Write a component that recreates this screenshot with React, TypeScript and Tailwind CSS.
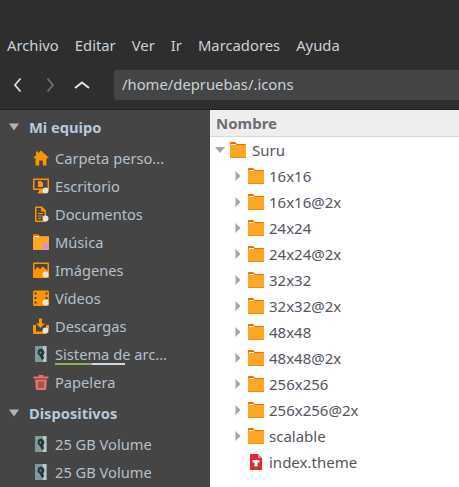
import type { ReactNode } from "react"

const font = { fontFamily: '"Noto Sans", sans-serif' }

function Folder() {
  return (
    <svg width="16" height="16" viewBox="0 0 16 16" className="shrink-0">
      <path d="M0 1a1 1 0 0 1 1-1h4l2 2h8a1 1 0 0 1 1 1V6H0z" fill="#f06a00" />
      <rect x="0" y="3" width="16" height="13" fill="#fea726" />
      <rect x="1" y="2" width="5" height="1" fill="#fff" />
      <rect x="0" y="15" width="16" height="1" fill="#e88f14" />
    </svg>
  )
}

function Home() {
  return (
    <svg width="16" height="16" viewBox="0 0 16 16">
      <path d="M8 0.500 L16 8 H13.500 V15.500 H9.800 V10.500 H6.200 V15.500 H2.500 V8 H0 L3 5.200 V1.500 H5 V3.300z" fill="#fe9500" />
    </svg>
  )
}

function Badge() {
  return <circle cx="12.500" cy="12.500" r="3" fill="#e4e4e4" />
}

function Desktop() {
  return (
    <svg width="16" height="16" viewBox="0 0 16 16">
      <path d="M1 0.500h14a1 1 0 0 1 1 1V11a1 1 0 0 1-1 1H10v2h1v1.500H5V14h1v-2H1a1 1 0 0 1-1-1V1.500a1 1 0 0 1 1-1z" fill="#fe9500" />
      <rect x="1.500" y="2" width="13" height="8.500" fill="#454545" />
      <path d="M5 3h3l2 2v4H5z" fill="#fe9500" />
      <Badge />
    </svg>
  )
}

function Doc() {
  return (
    <svg width="16" height="16" viewBox="0 0 16 16">
      <path d="M3 0.500h6l4 4V15a1 1 0 0 1-1 1H3a1 1 0 0 1-1-1V1.500a1 1 0 0 1 1-1z" fill="#fe9500" />
      <path d="M3.500 2h4.500v3.500h3.500V14.500h-8z" fill="#454545" />
      <path d="M5 7h5v1H5zM5 9.500h5v1H5zM5 12h3v1H5z" fill="#fe9500" />
      <Badge />
    </svg>
  )
}

function Music() {
  return (
    <svg width="16" height="16" viewBox="0 0 16 16">
      <path d="M0 1a1 1 0 0 1 1-1h4l2 2h8a1 1 0 0 1 1 1v3H0z" fill="#f06a00" />
      <rect x="0" y="2.500" width="16" height="13.500" rx="0.500" fill="#fea726" />
      <rect x="1" y="2" width="5" height="1" fill="#fff" />
      <rect x="9.500" y="9.500" width="6" height="6" fill="#d58fd8" />
    </svg>
  )
}

function Picture() {
  return (
    <svg width="16" height="16" viewBox="0 0 16 16">
      <rect x="0" y="0.500" width="16" height="15.500" rx="1" fill="#fe9500" />
      <rect x="1.500" y="2" width="13" height="6" fill="#454545" />
      <path d="M1.500 8l3-3 2.500 2 3-2.500 4.500 4v1h-13z" fill="#fe9500" />
      <Badge />
    </svg>
  )
}

function Film() {
  return (
    <svg width="16" height="16" viewBox="0 0 16 16">
      <rect x="0" y="0.500" width="16" height="15.500" rx="1.500" fill="#fe9500" />
      <path d="M1.500 2.500h2v2h-2zM1.500 7h2v2h-2zM1.500 11.500h2v2h-2zM12.500 2.500h2v2h-2zM12.500 7h2v2h-2z" fill="#454545" />
      <Badge />
    </svg>
  )
}

function Download() {
  return (
    <svg width="16" height="16" viewBox="0 0 16 16">
      <path d="M6 0.500h3v5h3l-4.500 4.500L3 5.500h3z" fill="#fe9500" />
      <path d="M0 7h3v6.500h10V16H1a1 1 0 0 1-1-1z" fill="#fe9500" />
      <path d="M13 7h3v4h-3z" fill="#fe9500" />
      <Badge />
    </svg>
  )
}

function Drive() {
  return (
    <svg width="16" height="16" viewBox="0 0 16 16">
      <rect x="2" y="0" width="11.500" height="16" fill="#7f9a9b" />
      <rect x="10" y="0" width="3.500" height="16" fill="#b7c6c6" />
      <path d="M7.500 2.500a4 4 0 0 1 2.800 6.800L11 12.500 9 14 6.800 10A4 4 0 0 1 7.500 2.500z" fill="#22373a" />
      <circle cx="7.500" cy="6.500" r="1" fill="#7f9a9b" />
    </svg>
  )
}

function Trash() {
  return (
    <svg width="16" height="16" viewBox="0 0 16 16">
      <path d="M0.500 2.500h5V1h5v1.500h5V4.500h-15z" fill="#ee6f67" />
      <path d="M2 5.500h12L13 16H3z" fill="#ee6f67" />
      <path d="M5.500 7.500h1v6.500h-1zM7.500 7.500h1v6.500h-1zM9.500 7.500h1v6.500h-1z" fill="#454545" />
    </svg>
  )
}

function ThemeFile() {
  return (
    <svg width="16" height="16" viewBox="0 0 16 16">
      <path d="M2 0h8l4 4v12H2z" fill="#e02b35" />
      <path d="M10 0l4 4h-4z" fill="#f28a8f" />
      <path d="M4.500 6h7v2.500H9.500V12.500h-3V8.500H4.500z" fill="#fff" />
    </svg>
  )
}

function SideRow({ icon, label, meter }: { icon: ReactNode; label: string; meter?: boolean }) {
  return (
    <div className="flex h-7 items-center pl-[33px]">
      <span className="flex w-[22px] shrink-0">{icon}</span>
      <span className="relative text-[14.67px] text-[#b4c0cc]">
        {label}
        {meter && (
          <span className="absolute left-0 top-[20px] flex h-0.5 w-[70px]">
            <span className="w-[37px] bg-[#8bb158]" />
            <span className="flex-1 bg-[#d8d8d8]" />
          </span>
        )}
      </span>
    </div>
  )
}

function SideHeader({ label }: { label: string }) {
  return (
    <div className="flex h-7 items-center pl-[8px]">
      <svg width="13" height="8" viewBox="0 0 13 8" className="mr-[8px] shrink-0">
        <path d="M1 0.500h10L6 7.500z" fill="#b4b4b4" />
      </svg>
      <span className="text-[14.67px] font-bold text-[#b4cadd]">{label}</span>
    </div>
  )
}

function TreeRow({ label, file }: { label: string; file?: boolean }) {
  return (
    <div className="flex h-[26px] items-center pl-[25px]">
      <span className="flex w-[13px] shrink-0">
        {!file && (
          <svg width="6" height="12" viewBox="0 0 6 12">
            <path d="M0.500 1l5 5-5 5z" fill="#a6a6a6" />
          </svg>
        )}
      </span>
      <span className="mr-[5px] flex">{file ? <ThemeFile /> : <Folder />}</span>
      <span className="text-[15px] text-[#55555f]">{label}</span>
    </div>
  )
}

const tree = ["16x16", "16x16@2x", "24x24", "24x24@2x", "32x32", "32x32@2x", "48x48", "48x48@2x", "256x256", "256x256@2x", "scalable"]

export default function App() {
  return (
    <div className="flex h-[487px] w-[459px] flex-col overflow-hidden bg-[#454545]" style={font}>
      <header className="h-[110px] shrink-0 border-b border-[#232323] bg-[#2e2e2e]">
        <nav className="flex gap-4 pl-[7px] pt-[35px] text-[14.8px] leading-[20px] text-[#c9d2da]">
          <span>Archivo</span>
          <span>Editar</span>
          <span>Ver</span>
          <span>Ir</span>
          <span>Marcadores</span>
          <span>Ayuda</span>
        </nav>
        <div className="mt-[15px] flex h-[30px] items-center">
          <div className="flex w-[114px] shrink-0 items-center pl-[13px] text-[#dcdcdc]">
            <svg width="10" height="16" viewBox="0 0 10 16" className="mr-[22px]">
              <path d="M7.500 1.500 L2 8 L7.500 14.500" fill="none" stroke="#dcdcdc" strokeWidth="1.800" />
            </svg>
            <svg width="10" height="16" viewBox="0 0 10 16" className="mr-[19px]">
              <path d="M2.500 1.500 L8 8 L2.500 14.500" fill="none" stroke="#707070" strokeWidth="1.800" />
            </svg>
            <svg width="16" height="10" viewBox="0 0 16 10">
              <path d="M1 8 L8 2.500 L15 8" fill="none" stroke="#e6e6e6" strokeWidth="2" />
            </svg>
          </div>
          <div className="flex h-[30px] flex-1 items-center rounded-l-[2px] bg-[#454545] pb-[2px] pl-[8px] text-[14.8px] text-[#c9d2da]">
            /home/depruebas/.icons
          </div>
        </div>
      </header>
      <div className="flex min-h-0 flex-1">
        <aside className="w-[210px] shrink-0 pt-[3px]">
          <SideHeader label="Mi equipo" />
          <div className="pt-[3px]">
            <SideRow icon={<Home />} label="Carpeta perso..." />
            <SideRow icon={<Desktop />} label="Escritorio" />
            <SideRow icon={<Doc />} label="Documentos" />
            <SideRow icon={<Music />} label="Música" />
            <SideRow icon={<Picture />} label="Imágenes" />
            <SideRow icon={<Film />} label="Vídeos" />
            <SideRow icon={<Download />} label="Descargas" />
            <SideRow icon={<Drive />} label="Sistema de arc..." meter />
            <SideRow icon={<Trash />} label="Papelera" />
          </div>
          <div className="pt-[3px]">
            <SideHeader label="Dispositivos" />
          </div>
          <div className="pt-[3px]">
            <SideRow icon={<Drive />} label="25 GB Volume" />
            <SideRow icon={<Drive />} label="25 GB Volume" />
          </div>
        </aside>
        <main className="min-w-0 flex-1 bg-white">
          <div className="flex h-[27px] items-center border-b border-[#d8d8d8] bg-[#eeeeee] pl-[6px] text-[15px] font-bold text-[#6d6d75]">
            Nombre
          </div>
          <div className="flex h-[26px] items-center pl-[5px]">
            <span className="flex w-[15px] shrink-0">
              <svg width="10" height="6" viewBox="0 0 10 6">
                <path d="M0 0h10L5 6z" fill="#a6a6a6" />
              </svg>
            </span>
            <span className="mr-[6px] flex">
              <Folder />
            </span>
            <span className="text-[15px] text-[#55555f]">Suru</span>
          </div>
          {tree.map((name) => (
            <TreeRow key={name} label={name} />
          ))}
          <TreeRow label="index.theme" file />
        </main>
      </div>
    </div>
  )
}
